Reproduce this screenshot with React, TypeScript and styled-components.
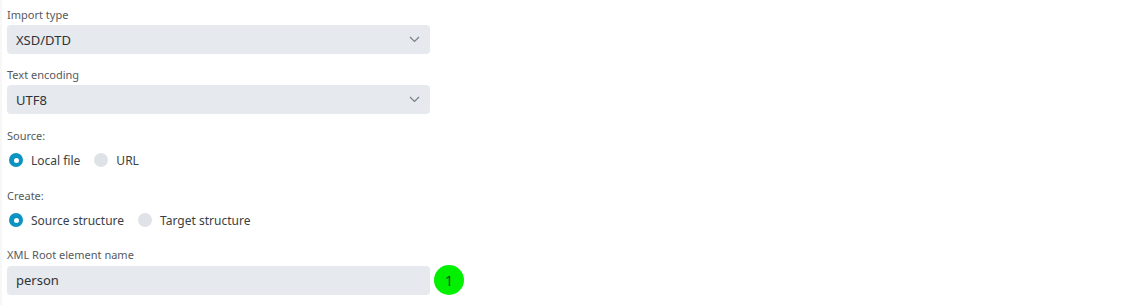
import styled, { createGlobalStyle } from "styled-components";

const GlobalStyle = createGlobalStyle`
  html, body {
    margin: 0;
    padding: 0;
    background: #ffffff;
  }
  body {
    font-family: "Noto Sans", "Open Sans", sans-serif;
  }
`;

const Page = styled.div`
  width: 1144px;
  height: 305px;
  box-sizing: border-box;
  border-left: 2px solid #f7f7f8;
  padding: 7px 0 0 5px;
`;

const Form = styled.div`
  width: 423px;
  display: flex;
  flex-direction: column;
`;

const Field = styled.div<{ $gap?: number }>`
  display: flex;
  flex-direction: column;
  margin-bottom: ${(p) => p.$gap ?? 14}px;
`;

const Label = styled.div`
  font-size: 11px;
  line-height: 16px;
  color: #555a60;
  margin-bottom: 2px;
`;

const SelectBox = styled.div`
  height: 29px;
  box-sizing: border-box;
  background: #e6e9ee;
  border-radius: 4px;
  display: flex;
  align-items: center;
  justify-content: space-between;
  padding: 0 10px 0 9px;
  font-size: 13px;
  color: #2f3337;
`;

const InputRow = styled.div`
  display: flex;
  align-items: center;
  gap: 4px;
  width: 460px;
`;

const TextInput = styled.div`
  width: 423px;
  flex: none;
  height: 29px;
  box-sizing: border-box;
  background: #e6e9ee;
  border-radius: 4px;
  display: flex;
  align-items: center;
  padding: 0 9px;
  font-size: 13px;
  color: #2f3337;
`;

const Badge = styled.div`
  width: 30px;
  height: 30px;
  border-radius: 50%;
  background: #00f000;
  color: #1d4d1d;
  font-size: 15px;
  display: flex;
  align-items: center;
  justify-content: center;
`;

const RadioRow = styled.div`
  display: flex;
  align-items: center;
  height: 28px;
  gap: 14px;
  padding-left: 2px;
`;

const RadioItem = styled.label`
  display: flex;
  align-items: center;
  gap: 8px;
  font-size: 12px;
  color: #3a3f44;
`;

const RadioDot = styled.span<{ $checked?: boolean }>`
  width: 14px;
  height: 14px;
  border-radius: 50%;
  box-sizing: border-box;
  background: ${(p) => (p.$checked ? "#0b93c1" : "#dfe2e7")};
  display: flex;
  align-items: center;
  justify-content: center;
  &::after {
    content: "";
    width: 5px;
    height: 5px;
    border-radius: 50%;
    background: ${(p) => (p.$checked ? "#ffffff" : "transparent")};
  }
`;

const Chevron = () => (
  <svg width="11" height="7" viewBox="0 0 11 7">
    <polyline
      points="1,1 5.5,5.5 10,1"
      fill="none"
      stroke="#7a7f87"
      strokeWidth="1.2"
    />
  </svg>
);

const Select = ({ value }: { value: string }) => (
  <SelectBox>
    <span>{value}</span>
    <Chevron />
  </SelectBox>
);

const Radio = ({ label, checked }: { label: string; checked?: boolean }) => (
  <RadioItem>
    <RadioDot $checked={checked} />
    {label}
  </RadioItem>
);

export default function App() {
  return (
    <Page>
      <GlobalStyle />
      <Form>
        <Field $gap={13}>
          <Label>Import type</Label>
          <Select value="XSD/DTD" />
        </Field>
        <Field>
          <Label>Text encoding</Label>
          <Select value="UTF8" />
        </Field>
        <Field>
          <Label>Source:</Label>
          <RadioRow>
            <Radio label="Local file" checked />
            <Radio label="URL" />
          </RadioRow>
        </Field>
        <Field $gap={13}>
          <Label>Create:</Label>
          <RadioRow>
            <Radio label="Source structure" checked />
            <Radio label="Target structure" />
          </RadioRow>
        </Field>
        <Field $gap={0}>
          <Label>XML Root element name</Label>
          <InputRow>
            <TextInput>person</TextInput>
            <Badge>1</Badge>
          </InputRow>
        </Field>
      </Form>
    </Page>
  );
}
